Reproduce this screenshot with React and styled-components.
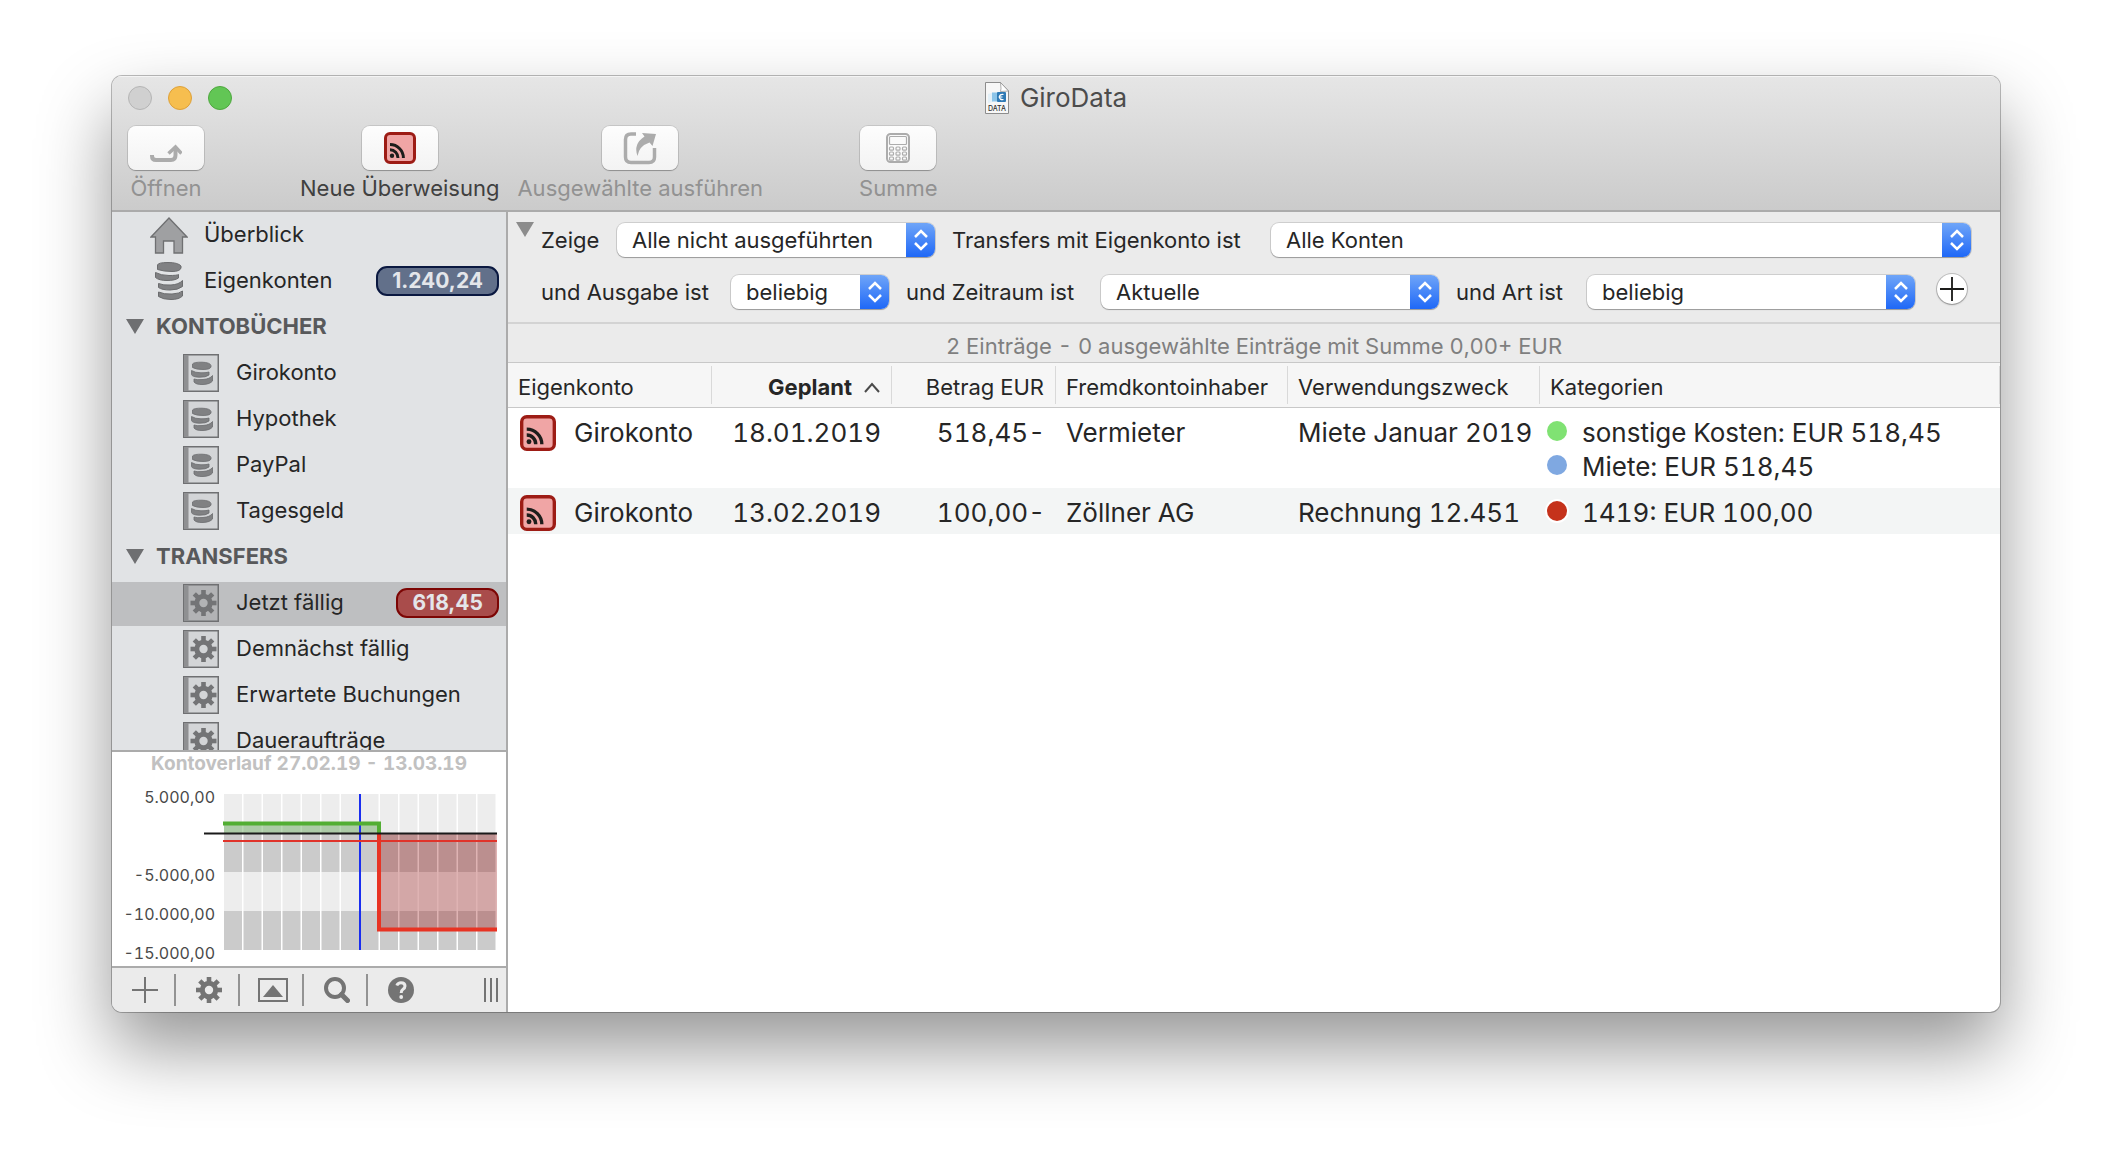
import React from 'react'
import styled, { createGlobalStyle } from 'styled-components'

const colors = {
    text: '#262626',
    muted: '#7f7f7f',
    icon: '#747474',
    line: '#ababab',
    panel: '#ebebeb',
    sidebar: '#e1e3e5',
}

const GlobalStyle = createGlobalStyle`
    *{
        box-sizing: border-box;
    }
    body{
        margin: 0;
        background: #fff;
        color: ${colors.text};
        font-family: Inter, "Liberation Sans", sans-serif;
        font-size: 22px;
    }
    button, select{
        margin: 0;
        padding: 0;
        border: 0;
        background: none;
        color: inherit;
        font: inherit;
        text-align: left;
    }
    svg{
        display: block;
        flex: none;
    }
`

/* ---------- window ---------- */

const Stage = styled.div`
    display: flex;
    min-height: 100vh;
    padding: 76px 112px 148px;
`
const Window = styled.div`
    display: flex;
    flex: 1;
    flex-direction: column;
    min-width: 0;
    border-radius: 10px;
    background: #fff;
    overflow: hidden;
    box-shadow: 0 0 0 1px rgba(0,0,0,.26), 0 36px 72px rgba(0,0,0,.42);
`
const Header = styled.header`
    border-bottom: 2px solid ${colors.line};
    background: linear-gradient(#e6e6e6, #cbcbcb);
    box-shadow: inset 0 1px 0 #f4f4f4;
`
const TitleBar = styled.div`
    display: grid;
    grid-template-columns: 1fr auto 1fr;
    align-items: center;
    height: 44px;
    padding: 0 16px;
`
const Lights = styled.div`
    display: flex;
    gap: 16px;
`
const Light = styled.button`
    width: 24px;
    height: 24px;
    border: 1px solid ${props => props.$edge};
    border-radius: 50%;
    background: ${props => props.$fill};
`
const Title = styled.h1`
    display: flex;
    align-items: center;
    gap: 11px;
    margin: 0;
    color: #4c4c4c;
    font-size: 26px;
    font-weight: 400;
    line-height: 32px;
`
const Toolbar = styled.div`
    display: flex;
    gap: 18px;
    padding: 6px 16px 8px;
`
const Spacer = styled.div`
    width: 60px;
`
const Tool = styled.button`
    display: flex;
    flex-direction: column;
    align-items: center;
    gap: 4px;
    color: ${props => props.disabled ? '#929292' : '#404040'};
    line-height: 28px;
    white-space: nowrap;
`
const ToolFace = styled.span`
    display: flex;
    align-items: center;
    justify-content: center;
    width: 76px;
    height: 44px;
    border-radius: 8px;
    background: linear-gradient(#fdfdfd, #f3f3f3);
    box-shadow: 0 0 0 1px rgba(0,0,0,.1), 0 1px 1px rgba(0,0,0,.25);
`
const Body = styled.div`
    display: flex;
    flex: 1;
`

/* ---------- sidebar ---------- */

const Sidebar = styled.aside`
    display: flex;
    flex: none;
    flex-direction: column;
    width: 396px;
    border-right: 2px solid ${colors.line};
    background: ${colors.sidebar};
`
const NavList = styled.nav`
    display: flex;
    flex: 1 1 0;
    flex-direction: column;
    gap: 2px;
    min-height: 320px;
    padding-top: 2px;
    overflow: hidden;
`
const Group = styled.button`
    display: flex;
    flex: none;
    align-items: center;
    gap: 12px;
    height: 44px;
    padding: 0 14px 4px;
    color: #58595b;
    font-weight: 700;
`
const NavItem = styled.button`
    display: flex;
    flex: none;
    align-items: center;
    height: 44px;
    padding: 0 7px 4px ${props => props.$nested ? 71 : 36}px;
    background: ${props => props.$active ? '#bebfc1' : 'transparent'};
`
const NavIcon = styled.span`
    display: flex;
    justify-content: ${props => props.$nested ? 'flex-start' : 'center'};
    width: ${props => props.$nested ? 53 : 56}px;
    margin-top: 2px;
    padding-right: ${props => props.$nested ? 0 : 14}px;
`
const Badge = styled.span`
    margin: 2px 0 0 auto;
    padding: 0 14px;
    border: 2px solid ${props => props.$edge};
    border-radius: 11px;
    background: ${props => props.$fill};
    color: #e4e6ea;
    font-size: 21px;
    font-weight: 700;
    line-height: 26px;
`
const ChartPanel = styled.section`
    border-top: 2px solid ${colors.line};
    border-bottom: 2px solid ${colors.line};
    background: #fff;
`
const ChartTitle = styled.h2`
    margin: 0;
    color: #c1c1c1;
    font-size: 19px;
    font-weight: 700;
    font-variant-numeric: tabular-nums;
    line-height: 24px;
    text-align: center;
`
const ChartSvg = styled.svg`
    width: 100%;
    font-size: 16px;
    font-variant-numeric: tabular-nums;
`
const Footer = styled.footer`
    display: flex;
    align-items: center;
    height: 44px;
    padding-right: 8px;
    background: ${colors.panel};
`
const FooterButton = styled.button`
    display: flex;
    align-items: center;
    justify-content: center;
    width: 64px;
    height: 32px;
    padding-left: 4px;
    border-right: 2px solid ${props => props.$last ? 'transparent' : '#939393'};
`
const Grip = styled.span`
    margin-left: auto;
`

/* ---------- filter ---------- */

const Main = styled.main`
    flex: 1;
    min-width: 0;
`
const Filter = styled.form`
    display: flex;
    padding: 10px 29px 13px 8px;
    border-bottom: 2px solid #d3d3d3;
    background: ${colors.panel};
`
const Disclosure = styled.button`
    align-self: flex-start;
    width: 25px;
`
const FilterRows = styled.div`
    display: flex;
    flex: 1;
    flex-direction: column;
    gap: 18px;
    min-width: 0;
    padding-top: 1px;
`
const FilterRow = styled.div`
    display: flex;
    align-items: center;
    height: 34px;
`
const FilterLabel = styled.label`
    flex: none;
    width: ${props => props.$width}px;
    white-space: nowrap;
`
const SelectBox = styled.span`
    position: relative;
    flex: ${props => props.$grow ? 1 : 0} 0 ${props => props.$width}px;
    margin-right: ${props => props.$end ? 0 : 17}px;
    height: 34px;
    border-radius: 8px;
    background: #fff;
    box-shadow: 0 0 0 1px rgba(0,0,0,.12), 0 1px 1px rgba(0,0,0,.25);
`
const SelectField = styled.select`
    width: 100%;
    height: 34px;
    padding: 0 34px 0 15px;
    appearance: none;
`
const Stepper = styled.span`
    position: absolute;
    top: 0;
    right: 0;
    display: flex;
    align-items: center;
    justify-content: center;
    width: 29px;
    height: 34px;
    border-radius: 0 8px 8px 0;
    background: linear-gradient(#6fa5f8, #1f68f7);
    pointer-events: none;
`
const AddButton = styled.button`
    display: flex;
    align-items: center;
    justify-content: center;
    width: 30px;
    height: 30px;
    margin: 0 4px 6px 22px;
    border-radius: 50%;
    background: #fff;
    box-shadow: 0 0 0 1px rgba(0,0,0,.18), 0 1px 2px rgba(0,0,0,.25);
`
const Summary = styled.p`
    margin: 0;
    padding: 8px 0 2px;
    background: ${colors.panel};
    color: ${colors.muted};
    font-variant-numeric: tabular-nums;
    line-height: 28px;
    text-align: center;
`

/* ---------- table ---------- */

const Table = styled.table`
    width: 100%;
    border-spacing: 0;
    table-layout: fixed;
    font-size: 26px;
    font-variant-numeric: tabular-nums;
    line-height: 34px;
`
const Col = styled.col`
    width: ${props => props.$width ? `${props.$width}px` : 'auto'};
`
const Th = styled.th`
    height: 46px;
    padding: 4px ${props => props.$right ? 12 : 0}px 0 10px;
    border-top: 1px solid #c8c8c8;
    border-bottom: 1px solid #c8c8c8;
    background: #f6f6f6 linear-gradient(#d9d9d9, #d9d9d9) right 3px / 1px 38px no-repeat;
    font-size: 22px;
    font-weight: ${props => props.$sorted ? 700 : 400};
    line-height: 28px;
    text-align: ${props => props.$right ? 'right' : 'left'};
    white-space: nowrap;
`
const SortLabel = styled.span`
    display: inline-flex;
    align-items: center;
    gap: 12px;
`
const Tr = styled.tr`
    background: ${props => props.$odd ? '#f3f5f5' : '#fff'};
`
const Td = styled.td`
    padding: 8px ${props => props.$right ? 11 : 0}px 4px 10px;
    text-align: ${props => props.$right ? 'right' : 'left'};
    vertical-align: top;
    white-space: nowrap;
`
const Account = styled.span`
    display: flex;
    align-items: center;
    gap: 18px;
    height: 34px;
    padding-left: 2px;
`
const Categories = styled.ul`
    margin: 0 0 0 -3px;
    padding: 0;
    list-style: none;
`
const Category = styled.li`
    display: flex;
    align-items: center;
    gap: 15px;
`
const Dot = styled.span`
    width: 20px;
    height: 20px;
    margin-bottom: 4px;
    border-radius: 50%;
    background: ${props => props.$fill};
    box-shadow: 0 0 0 2px #fff;
`

/* ---------- icons ---------- */

function TransferIcon({ size }){
    return(
        <svg width={size} height={size} viewBox="0 0 32 32" aria-hidden="true">
            <rect x="1.5" y="1.5" width="29" height="29" rx="4.5" fill="#f0a5a5" stroke="#9d1c15" strokeWidth="3"/>
            <circle cx="8" cy="23.8" r="2.2" fill="#1d1d1b"/>
            <path d="M6 17.8A8 8 0 0 1 14 26M6 12.6A13.4 13.4 0 0 1 19.4 26" fill="none" stroke="#1d1d1b" strokeWidth="3"/>
        </svg>
    )
}

function OpenIcon(){
    return(
        <svg width="32" height="44" viewBox="0 0 32 44" aria-hidden="true">
            <path d="M2 29v1q0 4 4 4h15q4.500 0 4.500-5v-7" fill="none" stroke="#acacac" strokeWidth="4"/>
            <path d="M18.500 27.500l7-6.500 6 6.500" fill="none" stroke="#acacac" strokeWidth="3.500"/>
        </svg>
    )
}

function ExecuteIcon(){
    return(
        <svg width="34" height="34" viewBox="0 0 34 34" aria-hidden="true">
            <path d="M13 3H8Q2.500 3 2.500 8.500V26Q2.500 31.500 8 31.500H26Q31.500 31.500 31.500 26V17" fill="none" stroke="#acacac" strokeWidth="3.500"/>
            <path d="M19 2L33 3 29.500 15 26.500 11.500Q16 15 14.500 25Q10 13 21.500 5.500Z" fill="#acacac"/>
        </svg>
    )
}

function CalculatorIcon(){
    const keys=[]
    for(let row=0;row<3;row++){
        for(let col=0;col<3;col++){
            keys.push(<rect key={`${row}${col}`} x={3.5+col*6.5} y={14+row*5} width="4" height="3.200" rx="1"/>)
        }
    }
    return(
        <svg width="24" height="30" viewBox="0 0 24 30" fill="#fafafa" stroke="#acacac" aria-hidden="true">
            <rect x="1" y="1" width="22" height="28" rx="3.500" strokeWidth="2"/>
            <rect x="3.500" y="3.500" width="17" height="8" rx="1" strokeWidth="1.200"/>
            <g strokeWidth="1.200">{keys}</g>
        </svg>
    )
}

function DocumentIcon(){
    return(
        <svg width="24" height="32" viewBox="0 0 24 32" aria-hidden="true">
            <path d="M.500.500H15.500L23.500 9V31.500H.500Z" fill="#f7f7f7" stroke="#8d8d8d"/>
            <path d="M15.500.500Q16.500 8 15.500 9.500L23.500 9Z" fill="#fff" stroke="#8d8d8d" strokeWidth=".7"/>
            <path d="M3 12L8 10.500V20L3 21Z" fill="#e3f0f8"/>
            <rect x="7" y="10.500" width="6" height="9" fill="#8cc4e8"/>
            <rect x="12" y="10" width="9" height="10" rx="1" fill="#2f7ab5"/>
            <path d="M18.500 12.500Q14.500 12 14.500 15T18.500 17.500M13.500 15h4" fill="none" stroke="#fff" strokeWidth="1.200"/>
            <text x="12" y="29" textAnchor="middle" fontSize="7" fontWeight="500" fill="#333">DATA</text>
        </svg>
    )
}

function Triangle({ fill }){
    return(
        <svg width="18" height="15" viewBox="0 0 18 15" aria-hidden="true">
            <path d="M0 0H18L9 15Z" fill={fill}/>
        </svg>
    )
}

function HomeIcon(){
    return(
        <svg width="38" height="37" viewBox="0 0 38 37" aria-hidden="true">
            <path d="M19 1L37 20H32.500V36H24V24H13.500V36H5.500V20H1Z" fill="#9fa0a2" stroke="#6f7072" strokeWidth="1.300"/>
        </svg>
    )
}

function CoinsIcon(){
    return(
        <svg width="28" height="38" viewBox="0 0 28 38" fill="#808183" stroke="#6b6c6e" aria-hidden="true">
            <path d="M2.500 3Q3 .5 13 .5T26 4V6Q25 9.500 17 9.500T2.500 7.500Z"/>
            <path d="M.5 10.500Q6 13.500 14 13.500T23.500 12.500V16Q20 18.500 12 18.500T.5 15.500Z"/>
            <path d="M27.500 18.500Q24 22.500 16 23T3.500 21.500V25.500Q7 28 15 28T27.500 24.500Z"/>
            <path d="M3.500 30Q9 32.500 17 32T27.500 29V34Q24 37.500 16 37.500T3.500 34.500Z"/>
        </svg>
    )
}

function GearShape({ fill }){
    return(
        <g fill={fill}>
            {[0,45,90,135,180,225,270,315].map(angle => (
                <rect key={angle} x="-2.300" y="-13" width="4.600" height="5.500" transform={`rotate(${angle})`}/>
            ))}
            <circle r="6.700" fill="none" stroke={fill} strokeWidth="5"/>
        </g>
    )
}

function BookIcon({ kind }){
    return(
        <svg width="36" height="38" viewBox="0 0 36 38" aria-hidden="true">
            <rect x=".75" y=".75" width="34.500" height="36.500" fill="#000" fillOpacity=".06" stroke="#6f7072" strokeWidth="1.500"/>
            <rect x="1" y="1" width="4.500" height="36" fill="#8f9092"/>
            {kind==='coins' ?
                <g fill="#808183" stroke="#6b6c6e" strokeWidth=".8">
                    <path d="M9.500 10Q11 8 19 8.200T28 11.500V13Q27 15.500 20 15.500T9.500 13.500Z"/>
                    <path d="M8.500 16.500Q12 18.800 18 18.800T26 18V21Q23 23.500 16 23.200T8.500 20.500Z"/>
                    <path d="M29.500 21.500Q27 25 20 25.500T11 25V28Q13 30.800 20 30.500T29.500 27Z"/>
                </g>
            :
                <g transform="translate(20.500 19)"><GearShape fill="#737476"/></g>
            }
        </svg>
    )
}

function PlusIcon({ size, color }){
    return(
        <svg width={size} height={size} viewBox="0 0 26 26" aria-hidden="true">
            <path d="M13 0V26M0 13H26" stroke={color} strokeWidth="2"/>
        </svg>
    )
}

function GearIcon(){
    return(
        <svg width="26" height="26" viewBox="-13 -13 26 26" aria-hidden="true">
            <GearShape fill={colors.icon}/>
        </svg>
    )
}

function PanelIcon(){
    return(
        <svg width="30" height="24" viewBox="0 0 30 24" aria-hidden="true">
            <rect x="1" y="1" width="28" height="22" fill="none" stroke={colors.icon} strokeWidth="2"/>
            <path d="M5 19L15 7L25 19Z" fill={colors.icon}/>
        </svg>
    )
}

function SearchIcon(){
    return(
        <svg width="26" height="26" viewBox="0 0 26 26" fill="none" stroke={colors.icon} aria-hidden="true">
            <circle cx="11" cy="11" r="9" strokeWidth="4"/>
            <path d="M17.500 17.500L23.500 23.500" strokeWidth="5" strokeLinecap="round"/>
        </svg>
    )
}

function HelpIcon(){
    return(
        <svg width="26" height="26" viewBox="0 0 26 26" aria-hidden="true">
            <circle cx="13" cy="13" r="13" fill={colors.icon}/>
            <path d="M8.800 8.500Q10 5.800 13 5.800Q17 5.800 17 9Q17 11 15 12.300Q13.200 13.500 13.200 16" fill="none" stroke="#ebebeb" strokeWidth="3"/>
            <circle cx="13.200" cy="20" r="1.900" fill="#ebebeb"/>
        </svg>
    )
}

/* ---------- data ---------- */

const kontobuecher=['Girokonto','Hypothek','PayPal','Tagesgeld']
const transfers=[
    { label: 'Jetzt fällig', active: true, badge: '618,45' },
    { label: 'Demnächst fällig' },
    { label: 'Erwartete Buchungen' },
    { label: 'Daueraufträge' },
]
const rows=[
    {
        account: 'Girokonto', date: '18.01.2019', amount: '518,45-', owner: 'Vermieter', purpose: 'Miete Januar 2019',
        categories: [
            { color: '#80e273', label: 'sonstige Kosten: EUR 518,45' },
            { color: '#7fa8e1', label: 'Miete: EUR 518,45' },
        ],
    },
    {
        account: 'Girokonto', date: '13.02.2019', amount: '100,00-', owner: 'Zöllner AG', purpose: 'Rechnung 12.451',
        categories: [{ color: '#c5321b', label: '1419: EUR 100,00' }],
    },
]
const axis=[['5.000,00',18],['-5.000,00',96],['-10.000,00',135],['-15.000,00',174]]

/* ---------- parts ---------- */

function Select({ id, value, width, grow, end }){
    return(
        <SelectBox $width={width} $grow={grow} $end={end}>
            <SelectField id={id} defaultValue={value}>
                <option>{value}</option>
            </SelectField>
            <Stepper>
                <svg width="14" height="22" viewBox="0 0 14 22" aria-hidden="true">
                    <path d="M1 8L7 2L13 8M1 14L7 20L13 14" fill="none" stroke="#fff" strokeWidth="2.500"/>
                </svg>
            </Stepper>
        </SelectBox>
    )
}

function BalanceChart(){
    const days=[]
    for(let day=0;day<14;day++){
        for(let band=0;band<4;band++){
            days.push(
                <rect key={`${day}-${band}`} x={112+day*19.5} y={18+band*39} width="18" height="39" fill={band%2 ? '#cbcbcb' : '#ededed'}/>
            )
        }
    }
    return(
        <ChartSvg viewBox="0 0 394 190" role="img" aria-label="Kontoverlauf">
            {days}
            {axis.map(([label,y]) => (
                <text key={label} x="103" y={y+9} textAnchor="end" fill="#4a4a4a">{label}</text>
            ))}
            <rect x="112" y="47" width="156" height="10" fill="#2f8a1f" fillOpacity=".34"/>
            <rect x="267" y="57" width="118" height="96" fill="#9c1414" fillOpacity=".32"/>
            <path d="M248 18V174" stroke="#1a2ef0" strokeWidth="2"/>
            <path d="M111 65H385" stroke="#e0332a" strokeWidth="2"/>
            <path d="M111 47.500H267V57" fill="none" stroke="#52ae33" strokeWidth="4"/>
            <path d="M267 57V153.500H385" fill="none" stroke="#e83323" strokeWidth="4"/>
            <path d="M92 57.500H385" stroke="#1a1a1a" strokeWidth="2"/>
        </ChartSvg>
    )
}

function FilterForm(){
    return(
        <Filter>
            <Disclosure type="button" aria-label="Filter"><Triangle fill="#8c8c8c"/></Disclosure>
            <FilterRows>
                <FilterRow>
                    <FilterLabel htmlFor="status" $width={76}>Zeige</FilterLabel>
                    <Select id="status" value="Alle nicht ausgeführten" width={318}/>
                    <FilterLabel htmlFor="konto" $width={319}>Transfers mit Eigenkonto ist</FilterLabel>
                    <Select id="konto" value="Alle Konten" width={338} grow end/>
                </FilterRow>
                <FilterRow>
                    <FilterLabel htmlFor="ausgabe" $width={190}>und Ausgabe ist</FilterLabel>
                    <Select id="ausgabe" value="beliebig" width={158}/>
                    <FilterLabel htmlFor="zeitraum" $width={195}>und Zeitraum ist</FilterLabel>
                    <Select id="zeitraum" value="Aktuelle" width={338} grow/>
                    <FilterLabel htmlFor="art" $width={131}>und Art ist</FilterLabel>
                    <Select id="art" value="beliebig" width={328} grow end/>
                    <AddButton type="button" aria-label="Bedingung hinzufügen"><PlusIcon size={24} color="#1d1d1b"/></AddButton>
                </FilterRow>
            </FilterRows>
        </Filter>
    )
}

function TransferTable(){
    return(
        <Table>
            <colgroup>
                <Col $width={204}/>
                <Col $width={180}/>
                <Col $width={164}/>
                <Col $width={232}/>
                <Col $width={252}/>
                <Col/>
            </colgroup>
            <thead>
                <tr>
                    <Th>Eigenkonto</Th>
                    <Th $right $sorted>
                        <SortLabel>
                            Geplant
                            <svg width="16" height="11" viewBox="0 0 16 11" aria-hidden="true">
                                <path d="M1 10L8 2L15 10" fill="none" stroke="#4a4a4a" strokeWidth="2"/>
                            </svg>
                        </SortLabel>
                    </Th>
                    <Th $right>Betrag EUR</Th>
                    <Th>Fremdkontoinhaber</Th>
                    <Th>Verwendungszweck</Th>
                    <Th>Kategorien</Th>
                </tr>
            </thead>
            <tbody>
                {rows.map((row,index) => (
                    <Tr key={row.date} $odd={index%2===1}>
                        <Td><Account><TransferIcon size={36}/>{row.account}</Account></Td>
                        <Td $right>{row.date}</Td>
                        <Td $right>{row.amount}</Td>
                        <Td>{row.owner}</Td>
                        <Td>{row.purpose}</Td>
                        <Td>
                            <Categories>
                                {row.categories.map(category => (
                                    <Category key={category.label}><Dot $fill={category.color}/>{category.label}</Category>
                                ))}
                            </Categories>
                        </Td>
                    </Tr>
                ))}
            </tbody>
        </Table>
    )
}

export default function App(){
    return(
        <Stage>
            <GlobalStyle/>
            <Window>
                <Header>
                    <TitleBar>
                        <Lights>
                            <Light aria-label="Schließen" $fill="#d0d0d0" $edge="#b4b4b4"/>
                            <Light aria-label="Minimieren" $fill="#f6be4f" $edge="#dda03a"/>
                            <Light aria-label="Vergrößern" $fill="#62c655" $edge="#4fa73f"/>
                        </Lights>
                        <Title><DocumentIcon/>GiroData</Title>
                    </TitleBar>
                    <Toolbar>
                        <Tool disabled><ToolFace><OpenIcon/></ToolFace>Öffnen</Tool>
                        <Spacer/>
                        <Tool><ToolFace><TransferIcon size={32}/></ToolFace>Neue Überweisung</Tool>
                        <Tool disabled><ToolFace><ExecuteIcon/></ToolFace>Ausgewählte ausführen</Tool>
                        <Spacer/>
                        <Tool disabled><ToolFace><CalculatorIcon/></ToolFace>Summe</Tool>
                    </Toolbar>
                </Header>
                <Body>
                    <Sidebar>
                        <NavList>
                            <NavItem><NavIcon><HomeIcon/></NavIcon>Überblick</NavItem>
                            <NavItem>
                                <NavIcon><CoinsIcon/></NavIcon>Eigenkonten
                                <Badge $fill="#62708a" $edge="#0a1840">1.240,24</Badge>
                            </NavItem>
                            <Group><Triangle fill="#6e6f71"/>KONTOBÜCHER</Group>
                            {kontobuecher.map(label => (
                                <NavItem key={label} $nested><NavIcon $nested><BookIcon kind="coins"/></NavIcon>{label}</NavItem>
                            ))}
                            <Group><Triangle fill="#6e6f71"/>TRANSFERS</Group>
                            {transfers.map(item => (
                                <NavItem key={item.label} $nested $active={item.active}>
                                    <NavIcon $nested><BookIcon kind="gear"/></NavIcon>{item.label}
                                    {item.badge && <Badge $fill="#a94c4b" $edge="#7c0504">{item.badge}</Badge>}
                                </NavItem>
                            ))}
                        </NavList>
                        <ChartPanel>
                            <ChartTitle>Kontoverlauf 27.02.19 - 13.03.19</ChartTitle>
                            <BalanceChart/>
                        </ChartPanel>
                        <Footer>
                            <FooterButton aria-label="Hinzufügen"><PlusIcon size={26} color={colors.icon}/></FooterButton>
                            <FooterButton aria-label="Einstellungen"><GearIcon/></FooterButton>
                            <FooterButton aria-label="Diagramm"><PanelIcon/></FooterButton>
                            <FooterButton aria-label="Suchen"><SearchIcon/></FooterButton>
                            <FooterButton aria-label="Hilfe" $last><HelpIcon/></FooterButton>
                            <Grip>
                                <svg width="14" height="24" viewBox="0 0 14 24" aria-hidden="true">
                                    <path d="M1 0V24M7 0V24M13 0V24" stroke={colors.icon} strokeWidth="2"/>
                                </svg>
                            </Grip>
                        </Footer>
                    </Sidebar>
                    <Main>
                        <FilterForm/>
                        <Summary>2 Einträge - 0 ausgewählte Einträge mit Summe 0,00+ EUR</Summary>
                        <TransferTable/>
                    </Main>
                </Body>
            </Window>
        </Stage>
    )
}
